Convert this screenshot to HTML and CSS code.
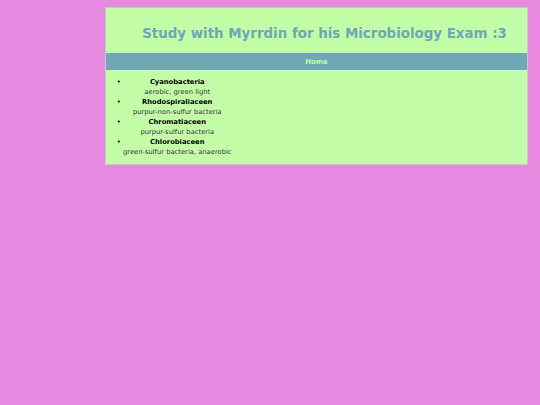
FILE: index.html
```html
<!DOCTYPE html>
<html>
<head>
<meta charset="utf-8">
<link rel="stylesheet" href="styles.css">
</head>
<body>
<div class="page">
  <header class="header">
    <h1 class="title">Study with Myrrdin for his Microbiology Exam :3</h1>
  </header>
  <nav class="nav"><span class="nav-link">Home</span></nav>
  <main class="content">
    <ul class="list">
      <li><b>Cyanobacteria</b><br>aerobic, green light</li>
      <li><b>Rhodospiraliaceen</b><br>purpur-non-sulfur bacteria</li>
      <li><b>Chromatiaceen</b><br>purpur-sulfur bacteria</li>
      <li><b>Chlorobiaceen</b><br>green-sulfur bacteria, anaerobic</li>
    </ul>
  </main>
</div>
</body>
</html>
```
FILE: styles.css
```css
html, body { margin: 0; padding: 0; }
body {
  background: #e68ae0;
  font-family: "DejaVu Sans", Verdana, sans-serif;
  padding: 7px 0 0 105px;
}
.page {
  width: 421px;
  background: #c3fda8;
  border: 1px solid #c8c8c8;
}
.header {
  height: 45px;
  box-sizing: border-box;
  padding: 5px 0 0 16px;
  display: flex;
  align-items: center;
  justify-content: center;
}
.title {
  margin: 0;
  font-size: 13.4px;
  font-weight: bold;
  color: #6fa8b4;
  white-space: nowrap;
}
.nav {
  height: 17px;
  box-sizing: border-box;
  padding-top: 1px;
  background: #6fa8b4;
  display: flex;
  align-items: center;
  justify-content: center;
}
.nav-link {
  font-size: 7px;
  font-weight: bold;
  color: #c3fda8;
}
.content {
  padding: 7px 0 6px 0;
}
.list {
  display: inline-block;
  margin: 0;
  padding-left: 17px;
  text-align: center;
  font-size: 6.75px;
  line-height: 10px;
  color: #333;
}
.list li::marker {
  content: "\2022  ";
  font-size: 7px;
  color: #000;
}
.list b { color: #000; }
```
